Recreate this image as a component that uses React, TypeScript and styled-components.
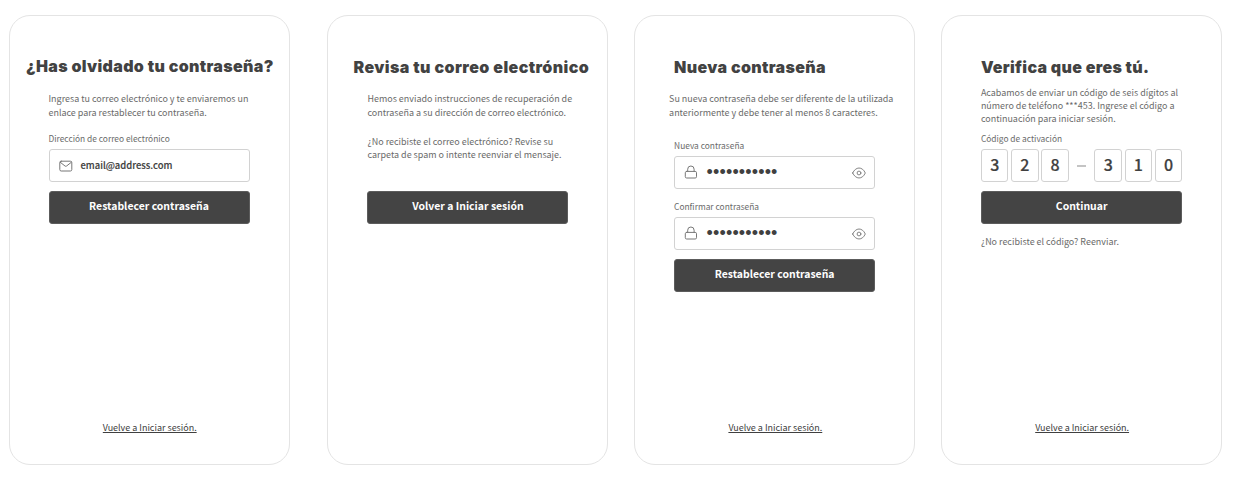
import React from "react";
import styled, { createGlobalStyle } from "styled-components";

const GlobalStyle = createGlobalStyle`
  *, *::before, *::after { box-sizing: border-box; }
  body {
    margin: 0;
    background: #fff;
    color: #444;
    font-family: "Noto Sans CJK SC", sans-serif;
  }
`;

const Screens = styled.main`
  display: grid;
  grid-template-columns: 281px 281px 281px 281px;
  column-gap: 25.8px;
  height: 484px;
  padding: 15px 0 19px 8.5px;
`;

const Card = styled.section<{ $shift?: number }>`
  display: flex;
  flex-direction: column;
  height: 450px;
  padding: 40px 0 29px;
  border: 1px solid #e4e4e4;
  border-radius: 21px;
  margin-left: ${(p) => p.$shift ?? 0}px;
  margin-right: ${(p) => -(p.$shift ?? 0)}px;
`;

const Title = styled.h1<{ $indent?: number; $top?: number; $tracking?: number }>`
  margin: ${(p) => p.$top ?? -1}px 0 0 ${(p) => p.$indent ?? 39}px;
  height: 24px;
  font: 900 16px/24px Inter, sans-serif;
  letter-spacing: ${(p) => p.$tracking ?? 0.34}px;
  color: #424242;
  white-space: nowrap;
`;

const Content = styled.div<{ $top?: number; $width?: number }>`
  display: flex;
  flex-direction: column;
  width: ${(p) => p.$width ?? 201}px;
  margin: ${(p) => p.$top ?? 0}px 0 0 39px;
`;

const Text = styled.p<{ $top?: number; $line?: number; $outdent?: number }>`
  margin: ${(p) => p.$top ?? 0}px 0 0 ${(p) => -(p.$outdent ?? 0)}px;
  font-size: 8.96px;
  line-height: ${(p) => p.$line ?? 14}px;
  color: #6a6a6a;
  white-space: nowrap;
`;

const Label = styled.label<{ $top: number }>`
  margin-top: ${(p) => p.$top}px;
  height: 12px;
  font-size: 8.38px;
  line-height: 12px;
  color: #6a6a6a;
`;

const Field = styled.div`
  display: flex;
  align-items: center;
  height: 33px;
  margin-top: 5px;
  padding: 0 8px 0 9px;
  border: 1px solid #d2d2d2;
  border-radius: 3px;
  color: #777;
`;

const Email = styled.span`
  margin: 0 0 1px 8px;
  font-size: 9.45px;
  font-weight: 500;
  line-height: 14px;
  color: #404040;
  -webkit-text-stroke: 0.15px #404040;
`;

const Password = styled.span`
  flex: 1;
  margin: 0 0 1px 8.5px;
  font: 18px/18px "Liberation Sans", sans-serif;
  letter-spacing: 0.15px;
  color: #404040;
`;

const Button = styled.button<{ $top?: number }>`
  height: 33px;
  margin-top: ${(p) => p.$top ?? 9}px;
  padding: 0 0 3px;
  border: 1px solid #5c5c5c;
  border-radius: 3px;
  background: #444;
  color: #fff;
  font: 700 10.45px/16px "Noto Sans CJK SC", sans-serif;
`;

const BackLink = styled.a`
  align-self: center;
  margin: auto 0 0 1.5px;
  font-size: 8.98px;
  line-height: 14px;
  color: #404040;
  text-decoration: underline;
  text-decoration-thickness: 1px;
  text-underline-offset: 1px;
`;

const Code = styled.div`
  display: flex;
  align-items: center;
  justify-content: space-between;
  margin-top: 5px;
`;

const Group = styled.div`
  display: flex;
  gap: 2.6px;
`;

const Digit = styled.span`
  width: 27.6px;
  height: 33px;
  border: 1px solid #d2d2d2;
  border-radius: 3px;
  font-size: 16px;
  font-weight: 500;
  line-height: 29px;
  text-align: center;
  color: #404040;
  -webkit-text-stroke: 0.2px #404040;
`;

const Dash = styled.span`
  width: 9px;
  height: 2px;
  background: #c4c4c4;
`;

const Glyph = styled.svg`
  flex: none;
  fill: none;
  stroke: currentColor;
  stroke-linecap: round;
  stroke-linejoin: round;
`;

const MailIcon = () => (
  <Glyph width="14" height="12" viewBox="0 0 14 12">
    <rect x="0.8" y="1.2" width="12" height="9.8" rx="1.4" />
    <path d="M1.2 2.2 L6 6 Q6.8 6.6 7.6 6 L12.4 2.2" />
  </Glyph>
);

const LockIcon = () => (
  <Glyph width="14" height="15" viewBox="0 0 14 15">
    <rect x="1.3" y="6.4" width="11.2" height="6.6" rx="1.3" />
    <path d="M3.7 6.2 V4.2 A3.2 3.2 0 0 1 10.1 4.2 V6.2" />
  </Glyph>
);

const EyeIcon = () => (
  <Glyph width="14" height="12" viewBox="0 0 14 12" strokeWidth="0.9">
    <path d="M0.7 6 C3.6 -0.7 10.4 -0.7 13.3 6 C10.4 12.7 3.6 12.7 0.7 6 Z" />
    <circle cx="7" cy="6" r="1.9" />
  </Glyph>
);

const PasswordField = () => (
  <Field>
    <LockIcon />
    <Password>•••••••••••</Password>
    <EyeIcon />
  </Field>
);

const CodeGroup = ({ digits }: { digits: string }) => (
  <Group>
    {digits.split("").map((d, i) => (
      <Digit key={i}>{d}</Digit>
    ))}
  </Group>
);

export default function App() {
  return (
    <>
      <GlobalStyle />
      <Screens>
        <Card>
          <Title $indent={16.5} $top={-2}>¿Has olvidado tu contraseña?</Title>
          <Content $top={14}>
            <Text>
              Ingresa tu correo electrónico y te enviaremos un
              <br />
              enlace para restablecer tu contraseña.
            </Text>
            <Label $top={12}>Dirección de correo electrónico</Label>
            <Field>
              <MailIcon />
              <Email>email@address.com</Email>
            </Field>
            <Button>Restablecer contraseña</Button>
          </Content>
          <BackLink>Vuelve a Iniciar sesión.</BackLink>
        </Card>

        <Card $shift={12.2}>
          <Title $indent={25} $tracking={0.41}>Revisa tu correo electrónico</Title>
          <Content $top={13}>
            <Text>
              Hemos enviado instrucciones de recuperación de
              <br />
              contraseña a su dirección de correo electrónico.
            </Text>
            <Text $top={15} $line={13}>
              ¿No recibiste el correo electrónico? Revise su
              <br />
              carpeta de spam o intente reenviar el mensaje.
            </Text>
            <Button $top={30}>Volver a Iniciar sesión</Button>
          </Content>
        </Card>

        <Card $shift={12}>
          <Title>Nueva contraseña</Title>
          <Content $top={13}>
            <Text $outdent={5}>
              Su nueva contraseña debe ser diferente de la utilizada
              <br />
              anteriormente y debe tener al menos 8 caracteres.
            </Text>
            <Label $top={19}>Nueva contraseña</Label>
            <PasswordField />
            <Label $top={11.3}>Confirmar contraseña</Label>
            <PasswordField />
            <Button>Restablecer contraseña</Button>
          </Content>
          <BackLink>Vuelve a Iniciar sesión.</BackLink>
        </Card>

        <Card $shift={12}>
          <Title $tracking={0.3}>Verifica que eres tú.</Title>
          <Content $top={7} $width={201.5}>
            <Text $line={13}>
              Acabamos de enviar un código de seis dígitos al
              <br />
              número de teléfono ***453. Ingrese el código a
              <br />
              continuación para iniciar sesión.
            </Text>
            <Label $top={7}>Código de activación</Label>
            <Code>
              <CodeGroup digits="328" />
              <Dash />
              <CodeGroup digits="310" />
            </Code>
            <Button>Continuar</Button>
            <Text $top={11}>¿No recibiste el código? Reenviar.</Text>
          </Content>
          <BackLink>Vuelve a Iniciar sesión.</BackLink>
        </Card>
      </Screens>
    </>
  );
}
